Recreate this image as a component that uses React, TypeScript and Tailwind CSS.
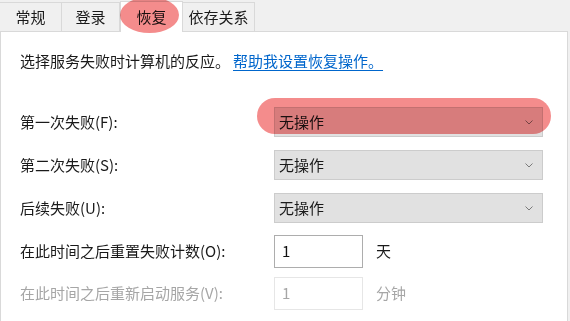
import { ReactNode } from "react";

const font = { fontFamily: '"Noto Sans CJK SC", "Noto Sans", sans-serif' };

function Tab({ label, w, active }: { label: string; w: string; active?: boolean }) {
  if (active) {
    return (
      <div className={`${w} relative z-10 -mb-px flex h-[31px] items-center justify-center border-x border-t border-[#d9d9d9] bg-white`}>
        {label}
      </div>
    );
  }
  return (
    <div className={`${w} flex h-[29px] items-center justify-center border-t border-r border-[#d9d9d9] bg-[#f0f0f0]`}>
      {label}
    </div>
  );
}

function Select({ value }: { value: string }) {
  return (
    <div className="flex h-[30px] w-[269px] items-center justify-between border border-[#cccccc] bg-[#e1e1e1] pl-[4px] pr-[9px]">
      <span>{value}</span>
      <svg width="8" height="5" viewBox="0 0 8 5" fill="none">
        <path d="M0.5 0.5L4 4L7.5 0.5" stroke="#7a7a7a" strokeWidth="1" />
      </svg>
    </div>
  );
}

function Row({ label, children, disabled }: { label: string; children: ReactNode; disabled?: boolean }) {
  return (
    <div className="flex items-center">
      <div className={`w-[254px] ${disabled ? "text-[#a6a6a6]" : "text-[#1a1a1a]"}`}>{label}</div>
      {children}
    </div>
  );
}

export default function App() {
  return (
    <div className="relative h-[321px] w-[570px] overflow-hidden bg-[#f0f0f0] text-[15px] text-[#1a1a1a]" style={font}>
      <div className="flex h-[31px] items-end">
        <Tab label="常规" w="w-[62px]" />
        <Tab label="登录" w="w-[58px]" />
        <Tab label="恢复" w="w-[63px]" active />
        <Tab label="依存关系" w="w-[72px]" />
      </div>

      <div className="mr-[2px] h-[300px] border border-[#d9d9d9] bg-white pl-[19px]">
        <div className="mt-[19px] flex h-[20px] items-center leading-[20px]">
          <span>选择服务失败时计算机的反应。</span>
          <span className="ml-[3px] text-[#0066cc] underline underline-offset-[3px]">帮助我设置恢复操作。</span>
        </div>

        <div className="mt-[36px] flex flex-col">
          <Row label="第一次失败(F):">
            <Select value="无操作" />
          </Row>
          <div className="mt-[13px]">
            <Row label="第二次失败(S):">
              <Select value="无操作" />
            </Row>
          </div>
          <div className="mt-[13px]">
            <Row label="后续失败(U):">
              <Select value="无操作" />
            </Row>
          </div>
          <div className="mt-[12px]">
            <Row label="在此时间之后重置失败计数(O):">
              <div className="flex h-[33px] w-[89px] items-center border border-[#adadad] bg-white pl-[7px] text-[#111]">1</div>
              <span className="ml-[13px]">天</span>
            </Row>
          </div>
          <div className="mt-[9px]">
            <Row label="在此时间之后重新启动服务(V):" disabled>
              <div className="flex h-[33px] w-[89px] items-center border border-[#e6e6e6] bg-white pl-[7px] text-[#a6a6a6]">1</div>
              <span className="ml-[13px] text-[#a6a6a6]">分钟</span>
            </Row>
          </div>
        </div>
      </div>

      {/* annotation marks */}
      <div className="pointer-events-none absolute left-[120px] top-[-3px] z-20 h-[36px] w-[59px] rounded-[50%] bg-[#f48c8c] mix-blend-multiply" />
      <div className="pointer-events-none absolute left-[257px] top-[98px] z-20 h-[36px] w-[294px] rounded-full bg-[#f48c8c] mix-blend-multiply" />
    </div>
  );
}
